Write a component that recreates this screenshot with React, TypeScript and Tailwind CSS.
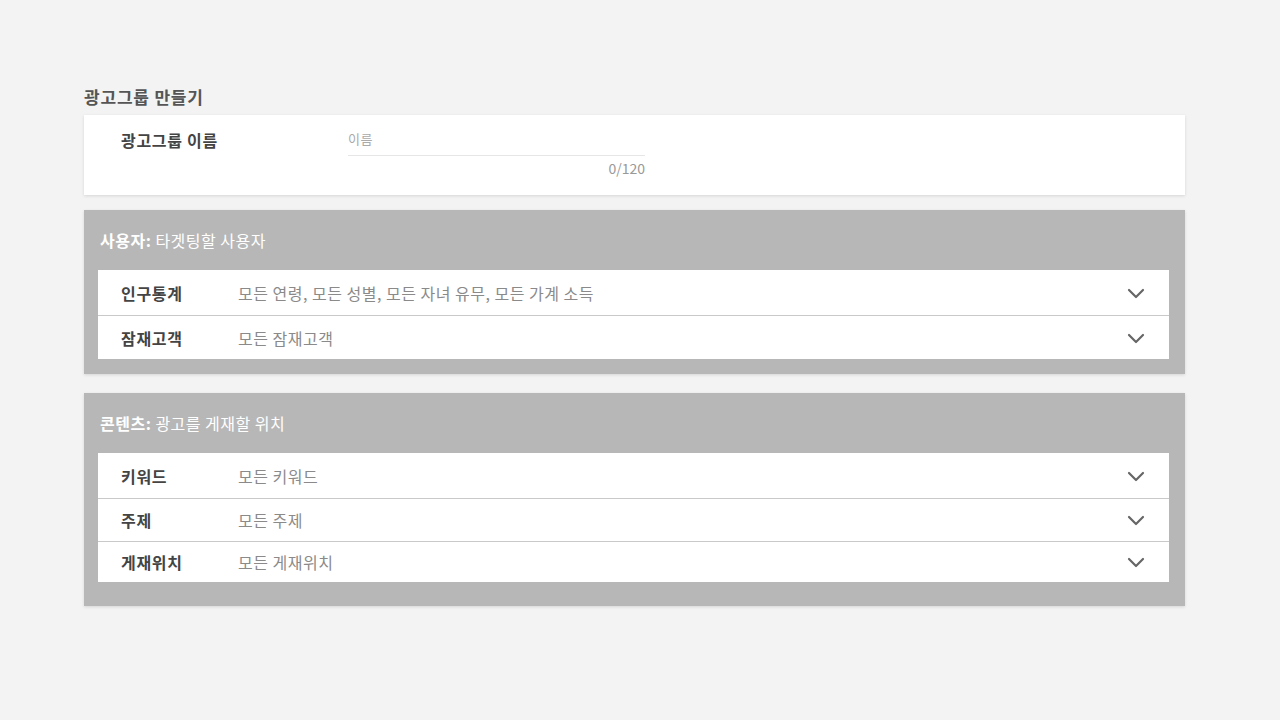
import React from 'react';

const font = { fontFamily: '"Noto Sans CJK KR", "Noto Sans", sans-serif' };

const Chevron = () => (
  <svg width="18" height="12" viewBox="0 0 18 12" fill="none">
    <path d="M2 3l7 7 7-7" stroke="#666" strokeWidth="2.2" strokeLinecap="round" strokeLinejoin="round" />
  </svg>
);

type Row = { label: string; value: string; h: string };

const Row: React.FC<{ row: Row; last: boolean }> = ({ row, last }) => (
  <div className={`flex items-center pl-[23px] pr-[24px] ${row.h} ${last ? '' : 'border-b border-[#c9c9c9]'}`}>
    <div className="w-[117px] text-[16px] tracking-[0.7px] font-bold text-[#444]">{row.label}</div>
    <div className="flex-1 text-[16px] tracking-[0.5px] text-[#8a8a8a]">{row.value}</div>
    <Chevron />
  </div>
);

const Section: React.FC<{ title: string; sub: string; rows: Row[]; pb: string }> = ({ title, sub, rows, pb }) => (
  <div className={`bg-[#b7b7b7] shadow-[0_1px_3px_rgba(0,0,0,0.12)] px-[14px] pr-[16px] ${pb}`}>
    <div className="h-[60px] flex items-center pl-[2px] text-[16px] tracking-[0.5px] text-white">
      <span className="font-bold">{title}</span>
      <span className="ml-1">{sub}</span>
    </div>
    <div className="bg-white">
      {rows.map((r, i) => (
        <Row key={r.label} row={r} last={i === rows.length - 1} />
      ))}
    </div>
  </div>
);

export default function App() {
  return (
    <div className="min-h-[720px] w-full bg-[#f3f3f3] pt-[84px] px-[84px] pr-[95px]" style={font}>
      <div className="text-[17px] tracking-[0.8px] font-bold text-[#555] h-[31px] leading-[26px]">광고그룹 만들기</div>
      <div className="bg-white shadow-[0_1px_3px_rgba(0,0,0,0.12)] h-[80px] flex pl-[37px] pt-[14px]">
        <div className="w-[227px] text-[16px] tracking-[0.7px] font-bold text-[#444] leading-[22px]">광고그룹 이름</div>
        <div className="w-[297px]">
          <div className="text-[13px] tracking-[0.5px] text-[#aaa] h-[27px] leading-[20px] border-b border-[#e6e6e6]">이름</div>
          <div className="text-right text-[14px] text-[#999] mt-[3px] leading-[18px]">0/120</div>
        </div>
      </div>
      <div className="h-[15px]" />
      <Section
        title="사용자:"
        sub="타겟팅할 사용자"
        pb="pb-[15px]"
        rows={[
          { label: '인구통계', value: '모든 연령, 모든 성별, 모든 자녀 유무, 모든 가계 소득', h: 'h-[46px]' },
          { label: '잠재고객', value: '모든 잠재고객', h: 'h-[43px]' },
        ]}
      />
      <div className="h-[19px]" />
      <Section
        title="콘텐츠:"
        sub="광고를 게재할 위치"
        pb="pb-[24px]"
        rows={[
          { label: '키워드', value: '모든 키워드', h: 'h-[46px]' },
          { label: '주제', value: '모든 주제', h: 'h-[43px]' },
          { label: '게재위치', value: '모든 게재위치', h: 'h-[40px]' },
        ]}
      />
    </div>
  );
}
